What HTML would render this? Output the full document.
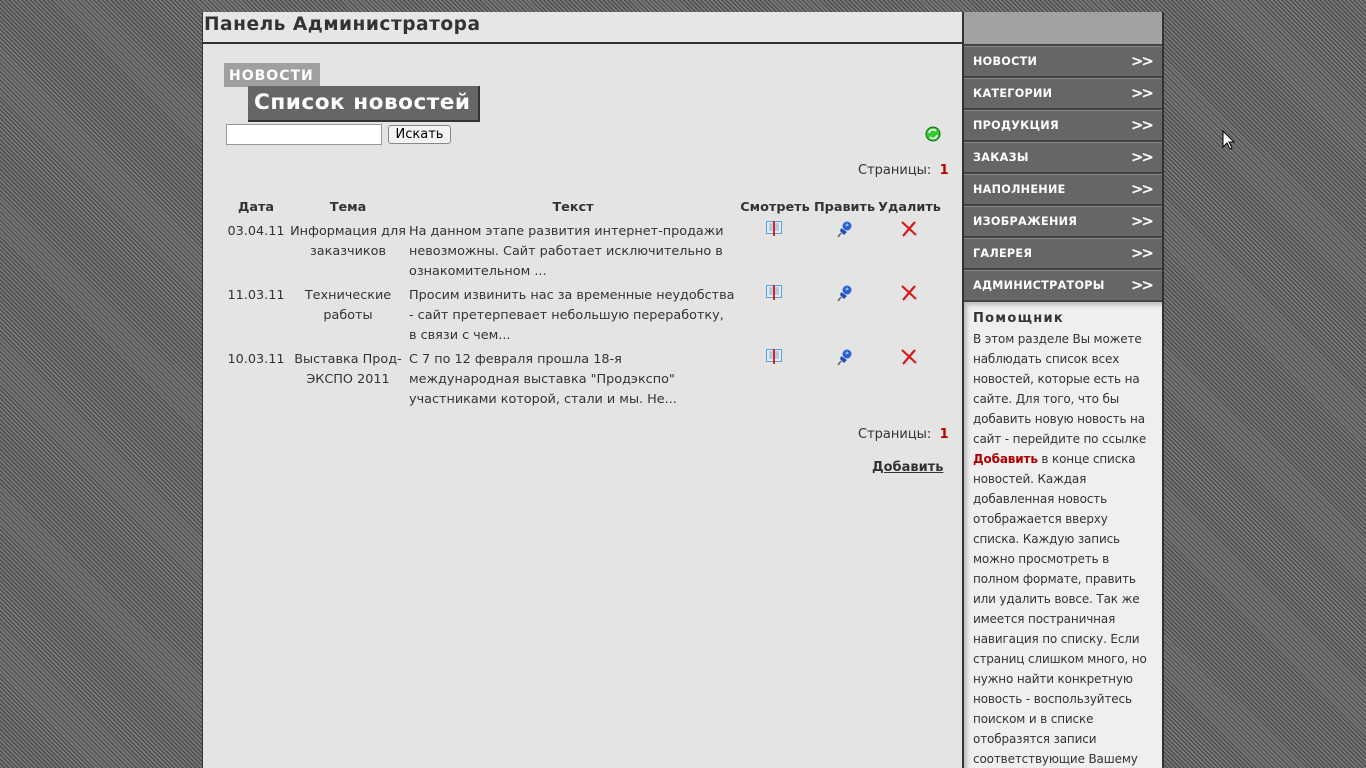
<!DOCTYPE html>
<html><head><meta charset="utf-8"><style>
*{margin:0;padding:0;box-sizing:border-box}
html,body{width:1366px;height:768px;overflow:hidden}
body{background:repeating-linear-gradient(45deg,#444 0,#444 1px,#777 1px,#777 3px);font-family:"DejaVu Sans","Liberation Sans",sans-serif;color:#333;position:relative}
.main{position:absolute;left:202px;top:12px;width:760px;height:756px;background:#e4e4e4;border-left:1px solid #333}
.hdr{height:32px;border-bottom:2px solid #333;font-weight:bold;font-size:18.6px;letter-spacing:0.5px;padding:2px 0 0 1px;color:#333;background:#e6e6e6}
.side{position:absolute;left:962px;top:12px;width:202px;height:756px;background:#444;border-left:2px solid #333;border-right:2px solid #333}
.stop{height:32px;background:#a2a2a2}
.mi{height:30px;margin-top:2px;background:#666;border-top:1px solid #888;color:#fff;font-weight:bold;font-size:11.2px;letter-spacing:0.3px;padding:8px 0 0 9px;position:relative}
.mi span{position:absolute;right:10px;top:5px;font-size:15px;letter-spacing:-2px;font-weight:bold}
.help{margin-top:2px;background:#efefef;height:470px;padding:6px 6px 0 9px;font-size:12px;letter-spacing:-0.15px;line-height:20px;color:#333;box-shadow:inset 3px 3px 4px #bbb}
.help b.t{letter-spacing:1.3px;font-size:13px}
a.red{color:#b00000;font-weight:bold;text-decoration:none}
.abs{position:absolute}
td,th{font-size:12.8px;line-height:20px;vertical-align:top;text-align:center;padding:0 1px;white-space:nowrap}
th{font-weight:bold;padding-bottom:4px;padding-top:0}
</style></head><body>
<div class="main">
 <div class="hdr">Панель Администратора</div>
 <div class="abs" style="left:21px;top:51px;width:96px;height:24px;background:#a0a0a0;color:#fff;font-weight:bold;font-size:14px;letter-spacing:1px;padding:5px 0 0 5px">НОВОСТИ</div>
 <div class="abs" style="left:45px;top:74px;width:232px;height:36px;background:#666;border-right:2px solid #333;border-bottom:2px solid #333;color:#fff;font-weight:bold;font-size:21.6px;letter-spacing:0.5px;padding:4px 0 0 6px">Список новостей</div>
 <div class="abs" style="left:23px;top:112px;width:156px;height:21px;background:#fff;border:1px solid #999"></div>
 <div class="abs" style="left:185px;top:113px;width:63px;height:19px;background:#f4f4f4;border:1px solid #888;border-radius:3px;font-size:13px;text-align:center;line-height:17px;color:#000">Искать</div>
 <svg class="abs" style="left:721px;top:113px" width="18" height="18" viewBox="0 0 18 18"><circle cx="9" cy="9" r="7" fill="#3c3" stroke="#161" stroke-width="1"/><path d="M5 8a4 4 0 0 1 7-2M13 10a4 4 0 0 1-7 2" stroke="#fff" stroke-width="1.6" fill="none"/></svg>
 <div class="abs" style="left:655px;top:151px;font-size:13px">Страницы:&nbsp; <b style="color:#b00000">1</b></div>
 <table class="abs" style="left:21px;top:186px;border-collapse:collapse;table-layout:fixed">
  <tr><th style="width:64px">Дата</th><th style="width:120px">Тема</th><th style="width:330px">Текст</th><th style="width:74px">Смотреть</th><th style="width:65px">Править</th><th style="width:65px">Удалить</th></tr>
  <tr style="height:64px"><td>03.04.11</td><td>Информация для<br>заказчиков</td><td style="text-align:left">На данном этапе развития интернет-продажи<br>невозможны. Сайт работает исключительно в<br>ознакомительном ...</td><td></td><td></td><td></td></tr>
  <tr style="height:64px"><td>11.03.11</td><td>Технические<br>работы</td><td style="text-align:left">Просим извинить нас за временные неудобства<br>- сайт претерпевает небольшую переработку,<br>в связи с чем...</td><td></td><td></td><td></td></tr>
  <tr style="height:64px"><td>10.03.11</td><td>Выставка Прод-<br>ЭКСПО 2011</td><td style="text-align:left">С 7 по 12 февраля прошла 18-я<br>международная выставка "Продэкспо"<br>участниками которой, стали и мы. Не...</td><td></td><td></td><td></td></tr>
 </table>
 <div class="abs" style="left:655px;top:415px;font-size:13px">Страницы:&nbsp; <b style="color:#b00000">1</b></div>
 <div class="abs" style="left:669px;top:448px;font-size:13px;font-weight:bold;text-decoration:underline;color:#333">Добавить</div>
</div>
<div class="side">
 <div class="stop"></div>
 <div class="mi">НОВОСТИ<span>&gt;&gt;</span></div>
 <div class="mi">КАТЕГОРИИ<span>&gt;&gt;</span></div>
 <div class="mi">ПРОДУКЦИЯ<span>&gt;&gt;</span></div>
 <div class="mi">ЗАКАЗЫ<span>&gt;&gt;</span></div>
 <div class="mi">НАПОЛНЕНИЕ<span>&gt;&gt;</span></div>
 <div class="mi">ИЗОБРАЖЕНИЯ<span>&gt;&gt;</span></div>
 <div class="mi">ГАЛЕРЕЯ<span>&gt;&gt;</span></div>
 <div class="mi">АДМИНИСТРАТОРЫ<span>&gt;&gt;</span></div>
 <div class="help"><b class="t">Помощник</b><br>В этом разделе Вы можете наблюдать список всех новостей, которые есть на сайте. Для того, что бы добавить новую новость на сайт - перейдите по ссылке <a class="red">Добавить</a> в конце списка новостей. Каждая добавленная новость отображается вверху списка. Каждую запись можно просмотреть в полном формате, править или удалить вовсе. Так же имеется постраничная навигация по списку. Если страниц слишком много, но нужно найти конкретную новость - воспользуйтесь поиском и в списке отобразятся записи соответствующие Вашему запросу.</div>
</div>
<svg class="abs" style="left:0;top:0" width="1366" height="768">
 <defs>
  <g id="bk"><rect x="0.5" y="0.5" width="15" height="12" fill="#dfeefa" stroke="#5aa0d8"/><path d="M3 3h4M3 5h4M3 7h4M3 9h4M9 3h4M9 5h4M9 7h4M9 9h4" stroke="#8ab"/><rect x="7" y="0" width="2" height="15" fill="#e02020"/></g>
  <g id="pn"><circle cx="10" cy="5" r="4.5" fill="#2a60d0"/><path d="M4 7l6 4-3 3-4-4z" fill="#1d4fb8"/><path d="M4 12l-3 4" stroke="#666" stroke-width="1.5"/><circle cx="10" cy="4" r="1.5" fill="#8ab4ff"/></g>
  <g id="xx"><path d="M1 1L15 14M14 1L2 15" stroke="#d41a1a" stroke-width="2.2"/></g>
 </defs>
 <use href="#bk" x="766" y="221"/><use href="#pn" x="837" y="221"/><use href="#xx" x="901" y="221"/>
 <use href="#bk" x="766" y="285"/><use href="#pn" x="837" y="285"/><use href="#xx" x="901" y="285"/>
 <use href="#bk" x="766" y="349"/><use href="#pn" x="837" y="349"/><use href="#xx" x="901" y="349"/>
 <path d="M1223 131v16l4-4 3 6 2-1-3-6h5z" fill="#fff" stroke="#000"/>
</svg>
</body></html>
